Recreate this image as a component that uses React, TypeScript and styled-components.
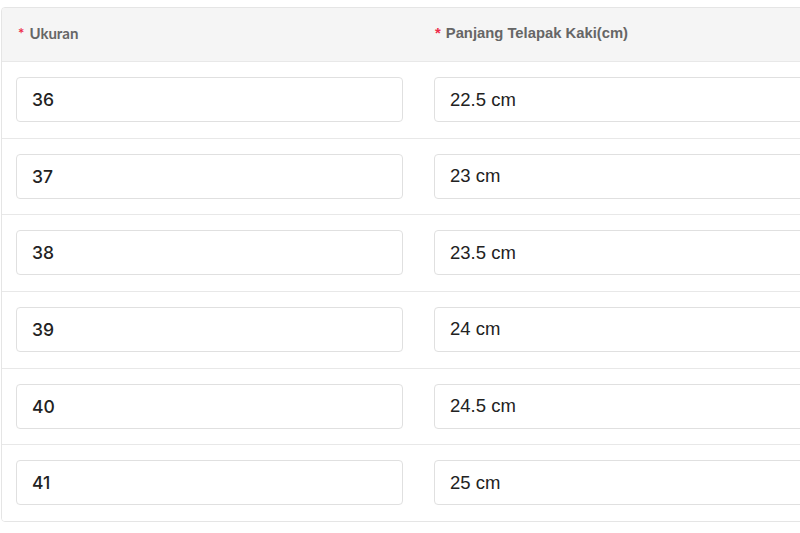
import React from "react";
import styled, { createGlobalStyle } from "styled-components";

const Global = createGlobalStyle`
  html, body { margin: 0; padding: 0; background: #fff; overflow: hidden; }
  body { font-family: "Liberation Sans", Arial, sans-serif; }
`;

const Page = styled.div`
  padding: 7px 0 0 1px;
  width: 1300px;
`;

const Table = styled.div`
  border: 1px solid #e5e5e5;
  border-radius: 4px;
  overflow: hidden;
  width: 1200px;
`;

const Row = styled.div<{ $head?: boolean }>`
  display: grid;
  grid-template-columns: 417px 1fr;
  background: ${(p) => (p.$head ? "#f5f5f5" : "#fff")};
  height: ${(p) => (p.$head ? "53px" : "75.67px")};
  border-bottom: 1px solid #e8e8e8;
  &:last-child { border-bottom: none; }
`;

const HeadCell = styled.div<{ $alt?: boolean }>`
  display: flex;
  align-items: center;
  padding: 0 16px 3px;
  font-family: ${(p) => (p.$alt ? '"Liberation Sans", Arial, sans-serif' : 'Lato, "Liberation Sans", sans-serif')};
  font-weight: 700;
  font-size: ${(p) => (p.$alt ? "14.8px" : "15px")};
  color: #666;
`;

const Star = styled.span`
  color: #ee2c4a;
  margin-right: 5px;
`;

const Cell = styled.div<{ $alt?: boolean }>`
  display: flex;
  align-items: flex-start;
  padding: ${(p) => (p.$alt ? "15px 16px 0 15px" : "15px 16px 0 14px")};
`;

const Input = styled.div<{ $alt?: boolean }>`
  box-sizing: border-box;
  width: 100%;
  height: 45px;
  border: 1px solid #e0e0e0;
  border-radius: 4px;
  display: flex;
  align-items: center;
  padding: 0 15px;
  font-family: ${(p) => (p.$alt ? '"Liberation Sans", Arial, sans-serif' : 'Inter, "Liberation Sans", sans-serif')};
  font-size: ${(p) => (p.$alt ? "18.5px" : "17.5px")};
  font-weight: ${(p) => (p.$alt ? 400 : 500)};
  color: #222;
`;

const rows = [
  ["36", "22.5 cm"],
  ["37", "23 cm"],
  ["38", "23.5 cm"],
  ["39", "24 cm"],
  ["40", "24.5 cm"],
  ["41", "25 cm"],
];

export default function App() {
  return (
    <>
      <Global />
      <Page>
        <Table>
          <Row $head>
            <HeadCell><Star>*</Star>Ukuran</HeadCell>
            <HeadCell $alt><Star>*</Star>Panjang Telapak Kaki(cm)</HeadCell>
          </Row>
          {rows.map(([a, b]) => (
            <Row key={a}>
              <Cell><Input>{a}</Input></Cell>
              <Cell $alt><Input $alt>{b}</Input></Cell>
            </Row>
          ))}
        </Table>
      </Page>
    </>
  );
}
